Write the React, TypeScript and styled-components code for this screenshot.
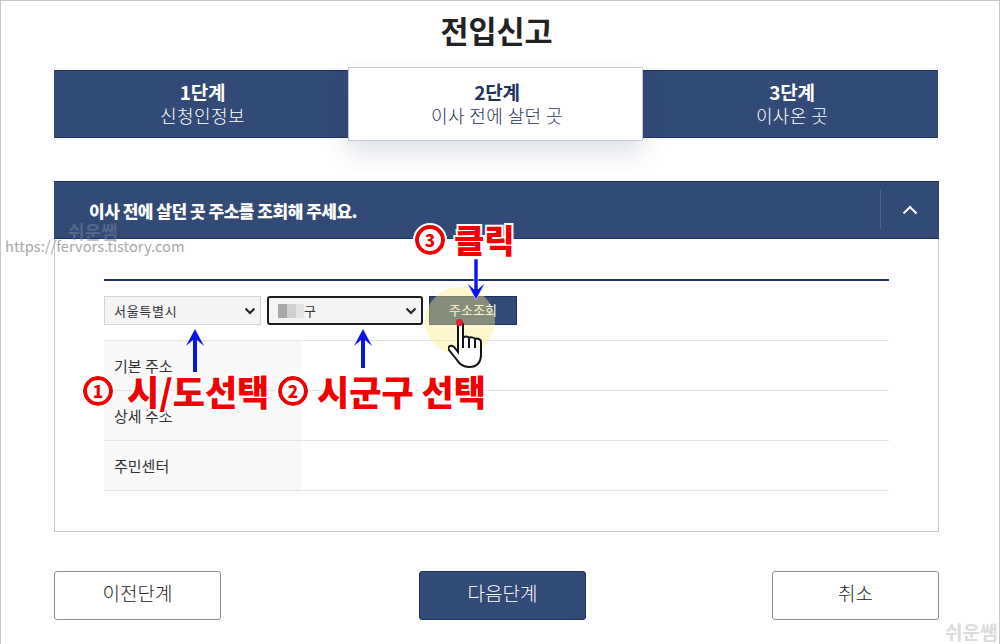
import styled, { createGlobalStyle } from 'styled-components';

const NAVY = '#324a76';
const FONT = '"Noto Sans CJK KR", "Noto Sans", sans-serif';

const GlobalStyle = createGlobalStyle`
  html, body {
    margin: 0;
    padding: 0;
    background: #fff;
    font-family: ${FONT};
  }
`;

const S = {
  Page: styled.div`
    position: relative;
    box-sizing: border-box;
    width: 1000px;
    height: 644px;
    padding: 0 60px 0 53px;
    overflow: hidden;
    border: 1px solid #c8c8c8;
    border-bottom: 0;
  `,
  Title: styled.h1`
    margin: 0;
    height: 68px;
    padding-top: 7px;
    box-sizing: border-box;
    font-size: 30.5px;
    line-height: 44px;
    font-weight: 700;
    text-align: center;
    color: #222;
    width: 885px;
  `,
  Steps: styled.div`
    display: grid;
    grid-template-columns: 294px 295px 295px;
    width: 884px;
    height: 68px;
    margin-top: 1px;
    background: ${NAVY};
    border-top: 1px solid #1d3160;
    border-bottom: 1px solid #1d3160;
    box-sizing: border-box;
  `,
  Step: styled.div<{ $active?: boolean }>`
    position: relative;
    box-sizing: border-box;
    display: flex;
    flex-direction: column;
    align-items: center;
    color: ${({ $active }) => ($active ? '#1d3160' : '#fff')};
    background: ${({ $active }) => ($active ? '#fff' : 'transparent')};
    border: ${({ $active }) => ($active ? '1px solid #c4c8d2' : '0')};
    height: ${({ $active }) => ($active ? '74px' : '66px')};
    margin-top: ${({ $active }) => ($active ? '-4px' : '0')};
    padding: ${({ $active }) => ($active ? '12px' : '9px')} 0 0 3px;
    box-shadow: ${({ $active }) => ($active ? '0 12px 24px rgba(40, 60, 100, 0.16)' : 'none')};
    z-index: ${({ $active }) => ($active ? 1 : 0)};
  `,
  StepNum: styled.strong`
    font-size: 19px;
    line-height: 24px;
    font-weight: 700;
    letter-spacing: -0.3px;
  `,
  StepName: styled.span`
    font-size: 18px;
    line-height: 23px;
    font-weight: 300;
    letter-spacing: 0.4px;
  `,
  Panel: styled.section`
    box-sizing: border-box;
    width: 885px;
    height: 351px;
    margin-top: 43px;
    border: 1px solid #c8c8c8;
    border-top: 0;
  `,
  PanelHead: styled.div`
    display: flex;
    align-items: center;
    height: 58px;
    margin: 0 -1px 0 -1px;
    padding-left: 35px;
    background: ${NAVY};
    border-top: 1px solid #1d3160;
    border-bottom: 1px solid #1d3160;
    box-sizing: border-box;
  `,
  PanelTitle: styled.h2`
    flex: 1;
    margin: 0;
    font-size: 17px;
    font-weight: 900;
    letter-spacing: -0.5px;
    color: #fff;
  `,
  Toggle: styled.div`
    display: flex;
    align-items: center;
    justify-content: center;
    width: 58px;
    height: 40px;
    border-left: 1px solid #4d638a;
  `,
  PanelBody: styled.div`
    padding: 40px 49px 0 49px;
  `,
  Rule: styled.div`
    height: 2px;
    background: #1d3160;
  `,
  SearchRow: styled.div`
    display: flex;
    gap: 6px;
    padding: 15px 0;
    border-bottom: 1px solid #e4e4e4;
  `,
  SelectBox: styled.div<{ $focus?: boolean }>`
    box-sizing: border-box;
    display: flex;
    align-items: center;
    justify-content: space-between;
    width: ${({ $focus }) => ($focus ? '156px' : '157px')};
    height: 29px;
    padding: 0 4px 0 9px;
    background: #f4f4f4;
    border: ${({ $focus }) => ($focus ? '2px solid #1c1c1c' : '1px solid #d4d4d4')};
    border-radius: ${({ $focus }) => ($focus ? '3px' : '0')};
    font-size: 13px;
    color: #333;
    letter-spacing: 0.7px;
  `,
  Blur: styled.span`
    display: inline-block;
    width: 26px;
    height: 14px;
    vertical-align: -2px;
    background: linear-gradient(90deg, #a8a8a8 0 9px, #cfcfcf 9px 18px, #e4e4e4 18px);
  `,
  SearchButton: styled.button`
    width: 88px;
    height: 29px;
    padding: 0 0 3px;
    border: 1px solid #1d3160;
    background: ${NAVY};
    color: #fff;
    font-family: ${FONT};
    font-size: 13px;
  `,
  Row: styled.div`
    display: flex;
    box-sizing: border-box;
    height: 50px;
    border-bottom: 1px solid #e4e4e4;
  `,
  RowHead: styled.div`
    display: flex;
    align-items: center;
    box-sizing: border-box;
    width: 197px;
    padding: 0 0 1px 10px;
    background: #f8f8f8;
    font-size: 15px;
    color: #333;
  `,
  Actions: styled.div`
    display: flex;
    width: 885px;
    margin-top: 39px;
  `,
  ActionButton: styled.button<{ $primary?: boolean }>`
    width: 167px;
    height: 49px;
    margin: ${({ $primary }) => ($primary ? '0 auto 0 198px' : '0')};
    padding: 0 0 6px;
    border-radius: 3px;
    border: 1px solid ${({ $primary }) => ($primary ? '#1d3160' : '#8e8e8e')};
    background: ${({ $primary }) => ($primary ? NAVY : '#fff')};
    color: ${({ $primary }) => ($primary ? '#fff' : '#222')};
    font-family: ${FONT};
    font-size: 19px;
    font-weight: 300;
  `,
  Note: styled.div<{ $x: number; $y: number; $size: number; $gap: number }>`
    position: absolute;
    left: ${({ $x }) => $x}px;
    top: ${({ $y }) => $y}px;
    display: flex;
    align-items: center;
    gap: ${({ $gap }) => $gap}px;
    font-size: ${({ $size }) => $size}px;
    line-height: 1;
    font-weight: 900;
    white-space: nowrap;
    color: #f00000;
    -webkit-text-stroke: 4px #fff;
    paint-order: stroke fill;
    z-index: 4;
  `,
  Ring: styled.span`
    box-sizing: border-box;
    display: flex;
    align-items: center;
    justify-content: center;
    width: 30px;
    height: 30px;
    border: 4px solid #f00000;
    border-radius: 50%;
    outline: 2px solid #fff;
    background: #fff;
    font-size: 17px;
    font-weight: 900;
    -webkit-text-stroke: 0;
  `,
  Arrow: styled.svg<{ $x: number; $y: number }>`
    position: absolute;
    left: ${({ $x }) => $x}px;
    top: ${({ $y }) => $y}px;
    z-index: 3;
  `,
  Glow: styled.div`
    position: absolute;
    left: 424px;
    top: 286px;
    width: 70px;
    height: 68px;
    border-radius: 50%;
    background: rgba(250, 235, 130, 0.42);
    z-index: 2;
  `,
  Dot: styled.div`
    position: absolute;
    left: 455px;
    top: 318px;
    width: 7px;
    height: 7px;
    border-radius: 50%;
    background: #e0202c;
    z-index: 4;
  `,
  Hand: styled.svg`
    position: absolute;
    left: 447px;
    top: 321px;
    z-index: 3;
  `,
  Mark: styled.div<{ $x: number; $y: number; $size: number; $color: string }>`
    position: absolute;
    left: ${({ $x }) => $x}px;
    top: ${({ $y }) => $y}px;
    font-size: ${({ $size }) => $size}px;
    line-height: 1;
    color: ${({ $color }) => $color};
    white-space: nowrap;
    z-index: 5;
  `,
  BoldMark: styled.span`
    font-weight: 700;
  `,
};

const Chevron = () => (
  <svg width="12" height="8" viewBox="0 0 12 8" fill="none">
    <path d="M1.5 1.5 6 6l4.5-4.5" stroke="#222" strokeWidth="2" />
  </svg>
);

const UpArrow = ({ x, y, h }: { x: number; y: number; h: number }) => (
  <S.Arrow $x={x} $y={y} width="20" height={h} viewBox={`0 0 20 ${h}`}>
    <path d={`M10 1 L19 18 L12 12 V${h} H8 V12 L1 18 Z`} fill="#0a14e6" />
  </S.Arrow>
);

const DownArrow = ({ x, y, h }: { x: number; y: number; h: number }) => (
  <S.Arrow $x={x} $y={y} width="20" height={h} viewBox={`0 0 20 ${h}`}>
    <path
      d={`M8 0 H12 V${h - 12} L19 ${h - 18} L10 ${h - 1} L1 ${h - 18} L8 ${h - 12} Z`}
      fill="#0a14e6"
      stroke="#fff"
      strokeWidth="0.6"
    />
  </S.Arrow>
);

const steps = [
  { num: '1단계', name: '신청인정보' },
  { num: '2단계', name: '이사 전에 살던 곳', active: true },
  { num: '3단계', name: '이사온 곳' },
];

const App = () => (
  <>
    <GlobalStyle />
    <S.Page>
      <S.Title>전입신고</S.Title>
      <S.Steps>
        {steps.map((s) => (
          <S.Step key={s.num} $active={s.active}>
            <S.StepNum>{s.num}</S.StepNum>
            <S.StepName>{s.name}</S.StepName>
          </S.Step>
        ))}
      </S.Steps>

      <S.Panel>
        <S.PanelHead>
          <S.PanelTitle>이사 전에 살던 곳 주소를 조회해 주세요.</S.PanelTitle>
          <S.Toggle>
            <svg width="16" height="10" viewBox="0 0 16 10" fill="none">
              <path d="M1.5 8.5 8 2l6.5 6.5" stroke="#fff" strokeWidth="2" />
            </svg>
          </S.Toggle>
        </S.PanelHead>
        <S.PanelBody>
          <S.Rule />
          <S.SearchRow>
            <S.SelectBox>
              서울특별시
              <Chevron />
            </S.SelectBox>
            <S.SelectBox $focus>
              <span>
                <S.Blur />구
              </span>
              <Chevron />
            </S.SelectBox>
            <S.SearchButton>주소조회</S.SearchButton>
          </S.SearchRow>
          {['기본 주소', '상세 주소', '주민센터'].map((label) => (
            <S.Row key={label}>
              <S.RowHead>{label}</S.RowHead>
            </S.Row>
          ))}
        </S.PanelBody>
      </S.Panel>

      <S.Actions>
        <S.ActionButton>이전단계</S.ActionButton>
        <S.ActionButton $primary>다음단계</S.ActionButton>
        <S.ActionButton>취소</S.ActionButton>
      </S.Actions>

      <S.Mark $x={67} $y={221} $size={18} $color="rgba(120,130,150,0.5)">
        <S.BoldMark>쉬운쌤</S.BoldMark>
      </S.Mark>
      <S.Mark $x={4} $y={238} $size={14.7} $color="#a8a8a8">
        https://fervors.tistory.com
      </S.Mark>
      <S.Mark $x={944} $y={621} $size={19} $color="#dcdcdc">
        <S.BoldMark>쉬운쌤</S.BoldMark>
      </S.Mark>

      <S.Glow />
      <UpArrow x={184} y={327} h={44} />
      <UpArrow x={352} y={327} h={40} />
      <DownArrow x={465} y={258} h={42} />
      <S.Hand width="38" height="48" viewBox="0 0 38 48">
        <path
          d="M10 3c0-3 5-3 5 0v13c1-2 5-2 6 0 1-1 5-1 6 1 2-1 6 0 6 3v12c0 7-3 13-12 13-6 0-9-2-12-7L1 28c-2-3 2-6 5-3l4 5Z"
          fill="#fff"
          stroke="#111"
          strokeWidth="2"
        />
        <path d="M15 16v10M21 17v9M27 18v8" stroke="#111" strokeWidth="2" />
      </S.Hand>
      <S.Dot />
      <S.Note $x={82} $y={372} $size={35} $gap={14}>
        <S.Ring>1</S.Ring>시/도선택
      </S.Note>
      <S.Note $x={277} $y={372} $size={35} $gap={9}>
        <S.Ring>2</S.Ring>시군구 선택
      </S.Note>
      <S.Note $x={414} $y={222} $size={33} $gap={9}>
        <S.Ring>3</S.Ring>클릭
      </S.Note>
    </S.Page>
  </>
);

export default App;
